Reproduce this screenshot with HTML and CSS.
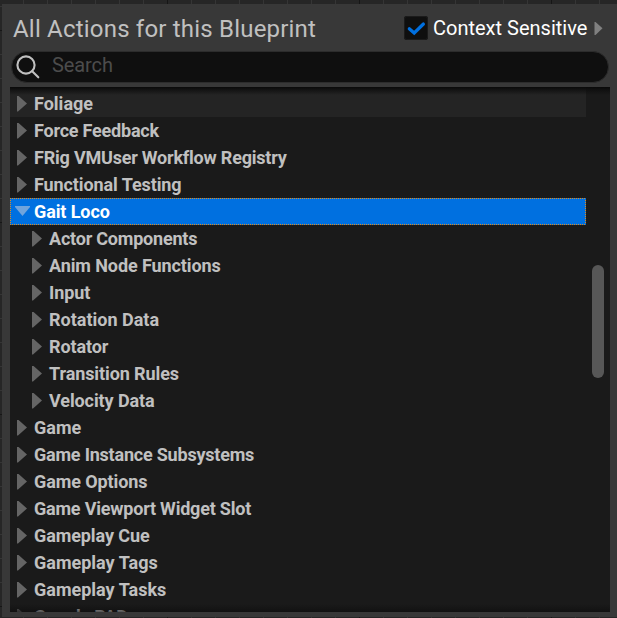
FILE: index.html
```
<!DOCTYPE html>
<html lang="en">
<head>
<meta charset="utf-8">
<title>All Actions for this Blueprint</title>
<link rel="stylesheet" href="styles.css">
</head>
<body>
<main class="panel">
  <header class="header">
    <h1 class="title">All Actions for this Blueprint</h1>
    <div class="context">
      <span class="checkbox"><svg width="24" height="24" viewBox="0 0 24 24"><path d="M5.3 12.7 L10.2 17 L19.4 8"/></svg></span>
      <span class="context-label">Context Sensitive</span>
      <svg class="more" width="9" height="13" viewBox="0 0 9 13"><path d="M.5 0H1.5L8.5 6.3 1.5 13H.5Z"/></svg>
    </div>
  </header>
  <div class="search">
    <svg class="lens" width="24" height="24" viewBox="0 0 24 24"><circle cx="10" cy="10" r="8.6"/><path d="M16.2 16.2 L22.3 22.3"/></svg>
    <span class="placeholder">Search</span>
  </div>
  <section class="list">
    <ul class="tree">
      <li class="row hovered"><i class="arrow"></i>Foliage</li>
      <li class="row tight"><i class="arrow"></i>Force Feedback</li>
      <li class="row tight"><i class="arrow"></i>FRig VMUser Workflow Registry</li>
      <li class="row snug"><i class="arrow"></i>Functional Testing</li>
      <li class="row snug selected"><i class="arrow open"></i>Gait Loco</li>
      <li class="row child tight"><i class="arrow"></i>Actor Components</li>
      <li class="row child snug"><i class="arrow"></i>Anim Node Functions</li>
      <li class="row child snug"><i class="arrow"></i>Input</li>
      <li class="row child"><i class="arrow"></i>Rotation Data</li>
      <li class="row child snug"><i class="arrow"></i>Rotator</li>
      <li class="row child snug"><i class="arrow"></i>Transition Rules</li>
      <li class="row child snug"><i class="arrow"></i>Velocity Data</li>
      <li class="row"><i class="arrow"></i>Game</li>
      <li class="row tight"><i class="arrow"></i>Game Instance Subsystems</li>
      <li class="row snug"><i class="arrow"></i>Game Options</li>
      <li class="row tight"><i class="arrow"></i>Game Viewport Widget Slot</li>
      <li class="row snug"><i class="arrow"></i>Gameplay Cue</li>
      <li class="row"><i class="arrow"></i>Gameplay Tags</li>
      <li class="row"><i class="arrow"></i>Gameplay Tasks</li>
      <li class="row tight"><i class="arrow"></i>Google PAD</li>
    </ul>
    <div class="scrollbar"><div class="thumb"></div></div>
  </section>
</main>
</body>
</html>
```
FILE: styles.css
```
* { box-sizing: border-box; }
body {
  margin: 0;
  height: 618px;
  padding: 4px 0 1px 2px;
  overflow: hidden;
  font-family: Roboto, "Liberation Sans", sans-serif;
  background:
    repeating-linear-gradient(90deg, transparent 0 167px, #161616 167px 168px, transparent 168px 192px),
    repeating-linear-gradient(180deg, transparent 0 30px, #161616 30px 31px, transparent 31px 192px),
    repeating-linear-gradient(90deg, transparent 0 23px, #353535 23px 24px),
    repeating-linear-gradient(180deg, transparent 0 6px, #353535 6px 7px, transparent 7px 24px),
    #262626;
}
.panel {
  height: 613px;
  padding: 0 7px 5px 8px;
  background: #383838;
}
.header {
  display: flex;
  justify-content: space-between;
  height: 47px;
  padding: 0 7px 0 3px;
}
.title {
  margin: 0;
  font-size: 24px;
  font-weight: 400;
  line-height: 50px;
  letter-spacing: .2px;
  color: #c0c0c0;
}
.context { display: flex; align-items: center; height: 48px; }
.checkbox {
  width: 24px;
  height: 24px;
  margin-right: 5px;
  border-radius: 3px;
  background: #0f0f0f;
  box-shadow: inset 0 0 0 1px #1b1b1b;
}
.checkbox svg { display: block; fill: none; stroke: #0070e0; stroke-width: 3.2; stroke-linecap: round; }
.context-label { width: 161px; font-size: 20px; line-height: 48px; color: #fff; white-space: nowrap; }
.more { fill: #808080; }
.search {
  display: flex;
  align-items: center;
  width: 598px;
  height: 32px;
  margin-left: 1px;
  padding-left: 4px;
  border: 1px solid #2c2c2c;
  border-radius: 16px;
  background: #0f0f0f;
}
.lens { fill: none; stroke: #c0c0c0; stroke-width: 2.1; stroke-linecap: round; }
.placeholder { margin: -5px 0 0 12px; font-size: 20px; letter-spacing: -.1px; color: #4c4c4c; }
.list {
  position: relative;
  display: flex;
  height: 525px;
  margin-top: 4px;
  overflow: hidden;
  background: #1a1a1a;
}
.list::before, .list::after {
  content: "";
  position: absolute;
  left: 0;
  right: 0;
  height: 8px;
}
.list::before { top: 0; background: linear-gradient(#090909, #0d0d0dcc 30%, transparent); }
.list::after { bottom: 0; background: linear-gradient(transparent, #0c0c0c99); }
.tree { width: 576px; margin: 0; padding: 3px 0 0; list-style: none; }
.row {
  display: flex;
  align-items: center;
  height: 27px;
  padding-left: 7px;
  font-size: 18px;
  font-weight: 700;
  color: #c0c0c0;
  white-space: nowrap;
}
.snug { letter-spacing: -.1px; }
.tight { letter-spacing: -.21px; }
.hovered { height: 30px; margin-top: -3px; padding-top: 3px; background: #242424; }
.child { padding-left: 22px; }
.arrow {
  width: 10px;
  height: 16px;
  margin-right: 7px;
  background: #656565;
  clip-path: polygon(0 0, 10% 0, 100% 50%, 10% 100%, 0 100%);
}
.selected {
  --dots: #e08a1c 0 1px, #0070e0 1px 2px;
  padding-left: 5px;
  color: #fff;
  background:
    repeating-linear-gradient(90deg, var(--dots)) top / 100% 1px no-repeat,
    repeating-linear-gradient(90deg, var(--dots)) bottom / 100% 1px no-repeat,
    repeating-linear-gradient(180deg, var(--dots)) left / 1px 100% no-repeat,
    repeating-linear-gradient(180deg, var(--dots)) right / 1px 100% no-repeat,
    #0070e0;
}
.open {
  width: 15px;
  height: 10px;
  margin: -1px 4px 0 0;
  background: #70a4dc;
  clip-path: polygon(0 0, 100% 0, 100% 10%, 50% 100%, 0 10%);
}
.scrollbar { width: 24px; padding: 178px 6px 0; }
.thumb { width: 12px; height: 113px; border-radius: 6px; background: #575757; }
```
